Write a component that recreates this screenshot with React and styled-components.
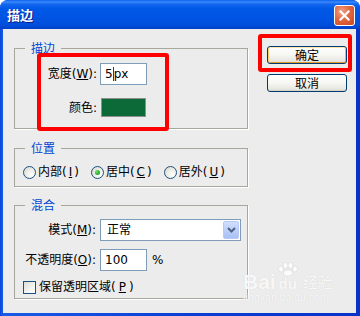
import React from 'react';
import styled, { createGlobalStyle } from 'styled-components';

const GlobalStyle = createGlobalStyle`
  html, body {
    margin: 0;
    padding: 0;
    background: #ffffff;
  }
  body {
    font-family: "DejaVu Sans", "Noto Sans CJK SC", sans-serif;
    font-size: 12px;
    color: #000;
  }
`;

const Window = styled.div`
  position: relative;
  width: 360px;
  height: 316px;
  display: flex;
  flex-direction: column;
  background: linear-gradient(to right, #0a48dc 0, #1a5ae6 3px, #0b3fd6 50%, #0832c8 100%);
  border-radius: 8px 8px 0 0;
  overflow: hidden;
`;

const TitleBar = styled.div`
  height: 29px;
  flex: none;
  display: flex;
  align-items: center;
  justify-content: space-between;
  padding: 0 5px 0 7px;
  background: linear-gradient(
    to bottom,
    #0a5ef0 0%,
    #3b8bf7 7%,
    #1467ef 14%,
    #0058e6 30%,
    #0054e3 60%,
    #004fdc 85%,
    #0040c8 100%
  );
`;

const Title = styled.span`
  color: #fff;
  font-family: "Noto Sans CJK SC", sans-serif;
  font-weight: bold;
  font-size: 13px;
  line-height: 16px;
  text-shadow: 1px 1px 0 #0a1a8a;
`;

const CloseButton = styled.div`
  width: 21px;
  height: 21px;
  margin-top: 2px;
  box-sizing: border-box;
  border: 1px solid #fff;
  border-radius: 3px;
  display: flex;
  align-items: center;
  justify-content: center;
  background: radial-gradient(circle at 35% 30%, #f0a485 0%, #e2673f 45%, #c8461f 100%);
`;

const Body = styled.div`
  flex: 1;
  margin: 0 4px 3px 3px;
  background: #ececec;
  display: flex;
  align-items: flex-start;
  gap: 10px;
  padding: 12px 0 0 11px;
`;

const LeftCol = styled.div`
  width: 234px;
  display: flex;
  flex-direction: column;
`;

const Group = styled.fieldset`
  margin: ${p => p.$top || 0}px 0 0 0;
  padding: 0;
  min-width: 0;
  width: 234px;
  box-sizing: border-box;
  border: 1px solid #a8a79c;
  box-shadow: 1px 1px 0 #ffffff;
`;

const Legend = styled.legend`
  margin-left: 10px;
  padding: 0 6px;
  font-size: 12px;
  line-height: 14px;
  color: #0046d5;
  font-family: "Noto Sans CJK SC", sans-serif;
`;

const RedBox = styled.div`
  position: relative;
  z-index: 1;
  margin: -2px 0 -3px 22px;
  width: 132px;
  box-sizing: border-box;
  border: 4px solid #ff0000;
  border-radius: 3px;
  padding: 6px 0 10px 0;
  display: grid;
  grid-template-columns: 56px auto;
  column-gap: 3px;
  row-gap: 13px;
  align-items: center;
`;

const FieldLabel = styled.span`
  text-align: right;
  white-space: nowrap;
  line-height: 16px;
`;

const TextBox = styled.div`
  width: ${p => p.$w || 47}px;
  height: 22px;
  box-sizing: border-box;
  border: 1px solid #7f9db9;
  background: #fff;
  padding-left: 4px;
  display: flex;
  align-items: center;
  line-height: 16px;
`;

const Caret = styled.span`
  display: inline-block;
  width: 1px;
  height: 14px;
  background: #1b3a8c;
`;

const Swatch = styled.div`
  width: 45px;
  height: 19px;
  margin-left: 1px;
  box-sizing: border-box;
  border: 1px solid #8e8f8f;
  background: #0b6a37;
`;

const RadioRow = styled.div`
  display: flex;
  align-items: center;
  gap: 12px;
  height: 16px;
  padding: 9px 0 6px 8px;
`;

const Choice = styled.label`
  display: flex;
  align-items: center;
  gap: 2px;
  line-height: 16px;
  white-space: nowrap;
`;

const RadioDot = styled.span`
  width: 13px;
  height: 13px;
  box-sizing: border-box;
  border-radius: 50%;
  border: 1px solid #1c5180;
  background: radial-gradient(circle at 70% 70%, #ffffff 0%, #f0f0ea 40%, #d4d4cc 100%);
  display: flex;
  align-items: center;
  justify-content: center;

  &::after {
    content: '';
    display: ${p => (p.$checked ? 'block' : 'none')};
    width: 5px;
    height: 5px;
    border-radius: 50%;
    background: radial-gradient(circle at 35% 35%, #6fe06a 0%, #21a121 70%, #198c19 100%);
  }
`;

const BlendGrid = styled.div`
  display: grid;
  grid-template-columns: 81px auto;
  column-gap: 4px;
  row-gap: 8px;
  align-items: center;
  padding: 7px 0 3px 0;
`;

const Select = styled.div`
  width: 141px;
  height: 22px;
  box-sizing: border-box;
  border: 1px solid #7f9db9;
  background: #fff;
  display: flex;
  align-items: center;
  justify-content: space-between;
  padding: 0 1px 0 6px;
  line-height: 16px;
`;

const DropButton = styled.div`
  width: 16px;
  height: 18px;
  box-sizing: border-box;
  border: 1px solid #b8c9f5;
  border-radius: 2px;
  background: linear-gradient(to bottom, #d1defd 0%, #bccff9 50%, #a9c0f4 100%);
  display: flex;
  align-items: center;
  justify-content: center;
`;

const InlineRow = styled.div`
  display: flex;
  align-items: center;
  gap: 5px;
`;

const CheckRow = styled.label`
  grid-column: 1 / span 2;
  display: flex;
  align-items: center;
  gap: 3px;
  height: 16px;
  padding-left: 8px;
  line-height: 16px;
`;

const CheckBox = styled.span`
  width: 13px;
  height: 13px;
  box-sizing: border-box;
  border: 1px solid #1c5180;
  background: linear-gradient(135deg, #dcdcd7 0%, #f4f4f1 60%, #ffffff 100%);
`;

const RightCol = styled.div`
  margin-top: -7px;
  display: flex;
  flex-direction: column;
`;

const OkFrame = styled.div`
  width: 94px;
  height: 38px;
  box-sizing: border-box;
  border: 4px solid #ff0000;
  border-radius: 3px;
  padding: 8px 1px 0 5px;
`;

const Button = styled.div`
  width: 80px;
  height: 18px;
  box-sizing: border-box;
  border: 1px solid #003c74;
  border-radius: 3px;
  display: flex;
  align-items: center;
  justify-content: center;
  font-family: "Noto Sans CJK SC", sans-serif;
  font-size: 12px;
  line-height: 16px;
  margin: ${p => (p.$cancel ? '2px 0 0 9px' : '0')};
  background: linear-gradient(to bottom, #ffffff 0%, #f6f6f3 50%, #e6e5de 90%, #d6d0c5 100%);
  box-shadow: ${p =>
    p.$default
      ? 'inset 0 1px 0 #fee4a8, inset 1px 0 0 #fbcd73, inset -1px 0 0 #f6b53c, inset 0 -1px 0 #e5972b'
      : 'inset 0 -1px 0 #d8d3c8'};
`;

const Watermark = styled.div`
  position: absolute;
  left: 243px;
  top: 260px;
  color: rgba(255, 255, 255, 0.85);
  text-shadow: 0 0 1px #cfcfcf;
  pointer-events: none;
`;

const MarkTop = styled.div`
  display: flex;
  align-items: flex-end;
  height: 32px;
`;

const MarkBig = styled.span`
  font-family: "Liberation Sans", sans-serif;
  font-weight: bold;
  font-size: 21px;
  line-height: 20px;
`;

const MarkCn = styled.span`
  font-family: "Noto Sans CJK SC", sans-serif;
  font-size: 15px;
  line-height: 20px;
  margin-left: 3px;
`;

const MarkSmall = styled.div`
  font-family: "Liberation Sans", sans-serif;
  font-size: 10px;
  line-height: 12px;
  letter-spacing: 0.3px;
`;

const PawWrap = styled.span`
  display: inline-flex;
  flex-direction: column;
  align-items: center;
`;

function Paw() {
  return (
    <svg width="24" height="14" viewBox="0 0 24 14">
      <g fill="rgba(255,255,255,0.85)" stroke="#d6d6d6" strokeWidth="0.6">
        <ellipse cx="5" cy="7" rx="2.4" ry="3" />
        <ellipse cx="9.5" cy="3.5" rx="2.4" ry="3" />
        <ellipse cx="14.5" cy="3.5" rx="2.4" ry="3" />
        <ellipse cx="19" cy="7" rx="2.4" ry="3" />
        <ellipse cx="12" cy="11" rx="4.5" ry="3" />
      </g>
    </svg>
  );
}

export default function App() {
  return (
    <>
      <GlobalStyle />
      <Window>
        <TitleBar>
          <Title>描边</Title>
          <CloseButton>
            <svg width="11" height="11" viewBox="0 0 11 11">
              <path d="M1.5 1.5 L9.5 9.5 M9.5 1.5 L1.5 9.5" stroke="#fff" strokeWidth="2.2" strokeLinecap="square" />
            </svg>
          </CloseButton>
        </TitleBar>
        <Body>
          <LeftCol>
            <Group>
              <Legend>描边</Legend>
              <RedBox>
                <FieldLabel>宽度(<u>W</u>):</FieldLabel>
                <TextBox>
                  5<Caret />px
                </TextBox>
                <FieldLabel>颜色:</FieldLabel>
                <Swatch />
              </RedBox>
            </Group>
            <Group $top={12}>
              <Legend>位置</Legend>
              <RadioRow>
                <Choice>
                  <RadioDot />
                  内部(<u>I</u>)
                </Choice>
                <Choice>
                  <RadioDot $checked />
                  居中(<u>C</u>)
                </Choice>
                <Choice>
                  <RadioDot />
                  居外(<u>U</u>)
                </Choice>
              </RadioRow>
            </Group>
            <Group $top={11}>
              <Legend>混合</Legend>
              <BlendGrid>
                <FieldLabel>模式(<u>M</u>):</FieldLabel>
                <Select>
                  <span>正常</span>
                  <DropButton>
                    <svg width="9" height="6" viewBox="0 0 9 6">
                      <path d="M1 1 L4.5 4.5 L8 1" fill="none" stroke="#4d6185" strokeWidth="2" />
                    </svg>
                  </DropButton>
                </Select>
                <FieldLabel>不透明度(<u>O</u>):</FieldLabel>
                <InlineRow>
                  <TextBox>100</TextBox>
                  <span>%</span>
                </InlineRow>
                <CheckRow>
                  <CheckBox />
                  保留透明区域(<u>P</u>)
                </CheckRow>
              </BlendGrid>
            </Group>
          </LeftCol>
          <RightCol>
            <OkFrame>
              <Button $default>确定</Button>
            </OkFrame>
            <Button $cancel>取消</Button>
          </RightCol>
        </Body>
        <Watermark>
          <MarkTop>
            <MarkBig>Bai</MarkBig>
            <PawWrap>
              <Paw />
              <MarkBig style={{ fontSize: 15, lineHeight: '16px' }}>du</MarkBig>
            </PawWrap>
            <MarkCn>经验</MarkCn>
          </MarkTop>
          <MarkSmall>jingyan.baidu.com</MarkSmall>
        </Watermark>
      </Window>
    </>
  );
}
